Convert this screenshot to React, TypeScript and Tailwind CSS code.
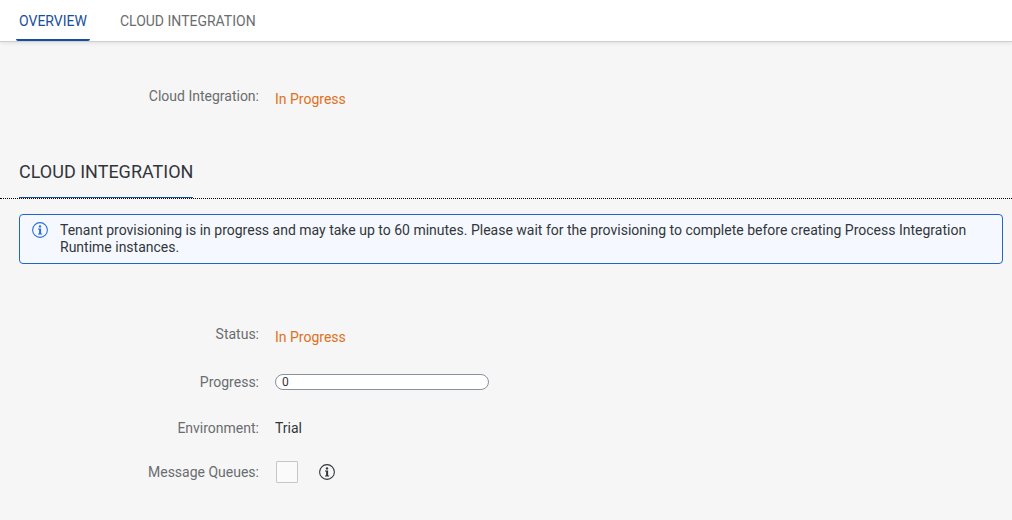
import type { ReactNode } from "react";

function InfoIcon({ className }: { className: string }) {
  return (
    <svg viewBox="0 0 16 16" fill="none" aria-hidden="true" className={className}>
      <circle cx="8" cy="8" r="7.4" stroke="currentColor" strokeWidth="1.1" />
      <circle cx="8" cy="4.4" r="1.2" fill="currentColor" />
      <path d="M6 6.5h3.1v5h1.1v1H6v-1h1.1v-4H6z" fill="currentColor" />
    </svg>
  );
}

function Row({ label, htmlFor, className, children }: { label: string; htmlFor: string; className: string; children: ReactNode }) {
  return (
    <div className={`grid grid-cols-[240px_1fr] gap-4 ${className}`}>
      <label htmlFor={htmlFor} className="text-right text-[#6a6d70]">
        {label}:
      </label>
      <div className="flex items-center">{children}</div>
    </div>
  );
}

export default function App() {
  return (
    <div className="min-h-screen bg-[#f6f6f6] font-[Roboto,sans-serif] text-sm text-[#32363a]">
      <nav aria-label="Sections" className="flex h-[42px] gap-[27px] border-b border-[#cfcfcf] bg-white px-4 shadow-[0_1px_4px_rgba(0,0,0,0.1)]">
        <a href="#overview" aria-current="page" className="flex items-center rounded-b-xs border-b-2 border-[#174f9e] px-[3px] pt-0.5 text-[#174f9e]">
          OVERVIEW
        </a>
        <a href="#cloud-integration" className="flex items-center border-b-2 border-transparent px-[3px] pt-0.5 text-[#6a6d70]">
          CLOUD INTEGRATION
        </a>
      </nav>

      <main>
        <section id="overview" className="px-[19px] pt-[44px]">
          <Row label="Cloud Integration" htmlFor="integration-state" className="items-start">
            <output id="integration-state" className="pt-[3px] text-[#e0701c]">In Progress</output>
          </Row>
        </section>

        <section id="cloud-integration" className="pt-[49px]">
          <header className="border-b border-dotted border-black px-[19px]">
            <h2 className="inline-block border-b border-[#174f9e] pb-[11px] align-top text-lg leading-7">CLOUD INTEGRATION</h2>
          </header>

          <div role="status" className="mt-[15px] mr-[9px] ml-[19px] flex gap-3 rounded border border-[#1f66cc] bg-[#f5f9ff] px-3 py-[7px]">
            <InfoIcon className="size-4 shrink-0 text-[#2a70d6]" />
            <p className="leading-[17px]">
              Tenant provisioning is in progress and may take up to 60 minutes. Please wait for the provisioning to complete before creating Process Integration Runtime instances.
            </p>
          </div>

          <div className="px-[19px] pt-[60px]">
            <Row label="Status" htmlFor="status" className="items-start">
              <output id="status" className="pt-[3px] text-[#e0701c]">In Progress</output>
            </Row>
            <Row label="Progress" htmlFor="progress" className="mt-[25px] items-center">
              <output id="progress" className="h-4 w-[214px] rounded-full border border-[#89919a] bg-white px-1.5 text-xs leading-[14px]">
                0
              </output>
            </Row>
            <Row label="Environment" htmlFor="environment" className="mt-[26px] items-center">
              <output id="environment">Trial</output>
            </Row>
            <Row label="Message Queues" htmlFor="message-queues" className="mt-[23px] items-center">
              <input
                id="message-queues"
                type="checkbox"
                disabled
                className="ml-px size-[22px] appearance-none rounded-[1px] border border-[#c4c6c8] bg-[#fafafa]"
              />
              <button type="button" aria-label="About message queues" className="ml-[21px]">
                <InfoIcon className="size-4" />
              </button>
            </Row>
          </div>
        </section>
      </main>
    </div>
  );
}
